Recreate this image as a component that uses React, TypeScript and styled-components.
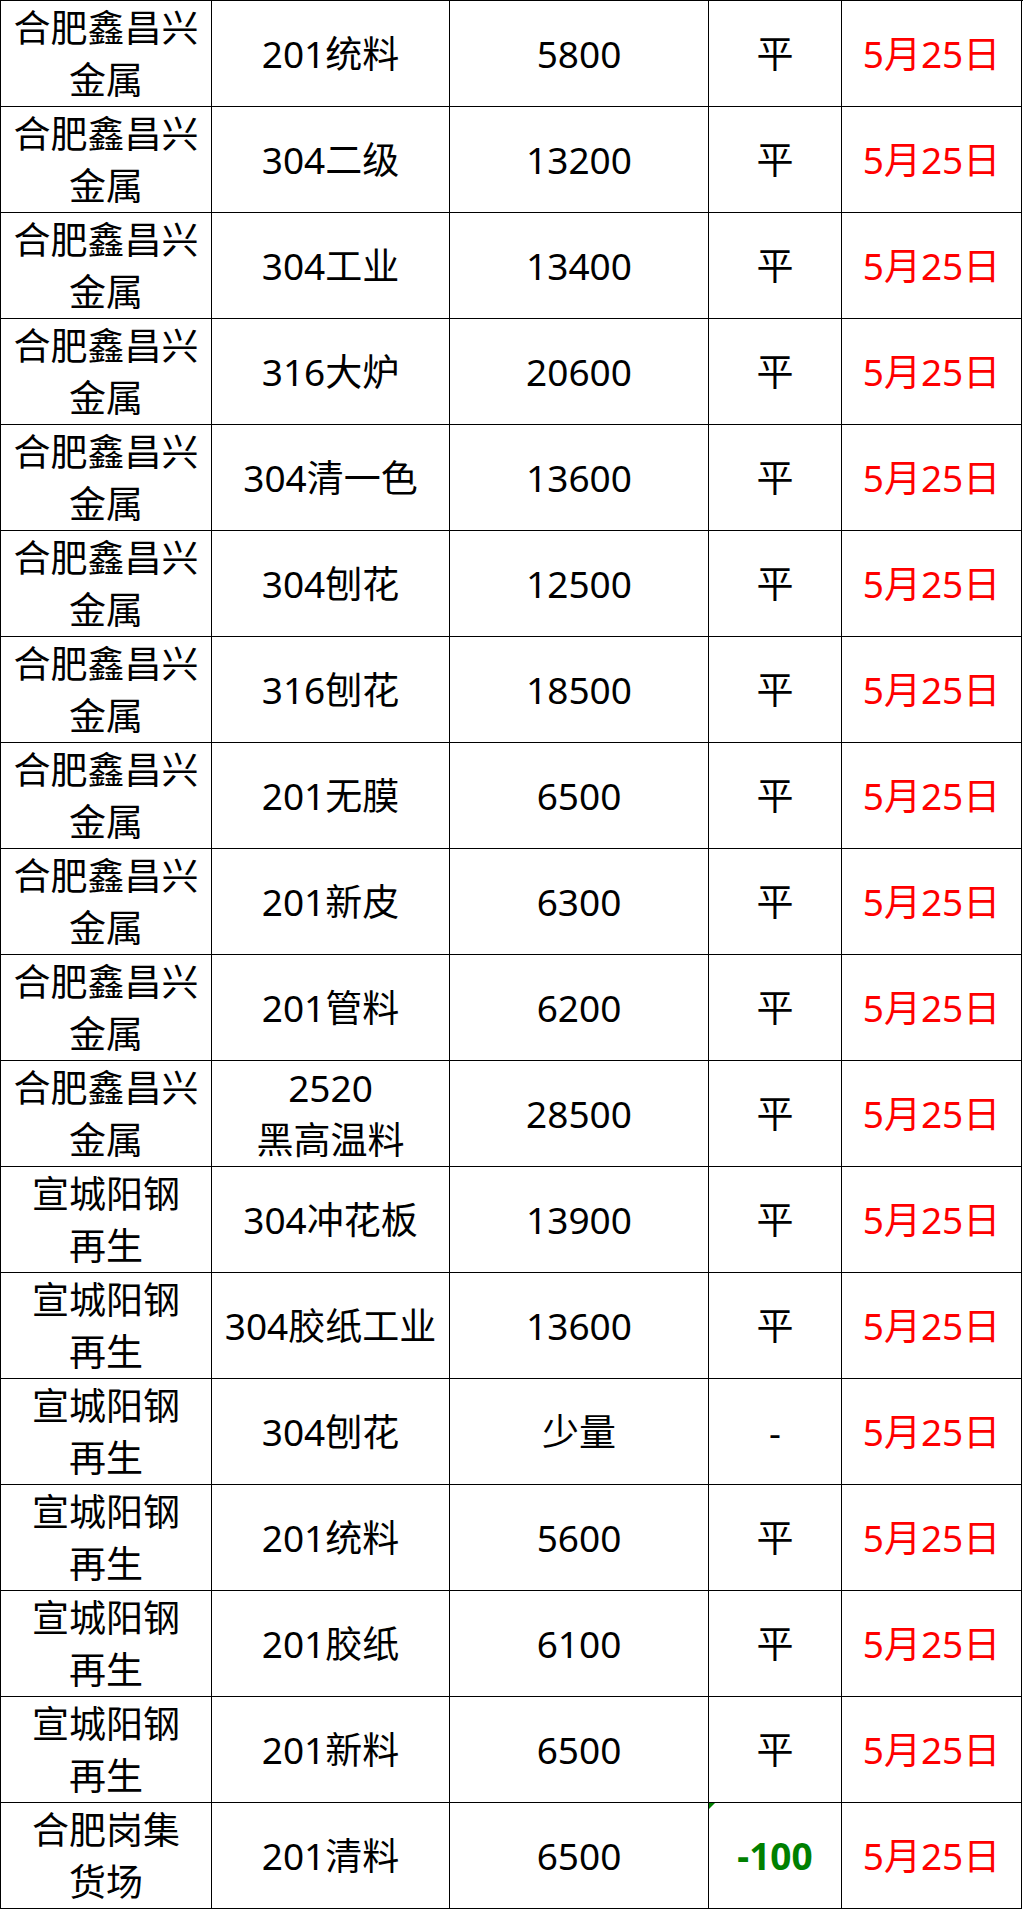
import React from 'react';
import styled, { createGlobalStyle } from 'styled-components';

type PriceRow = {
  company: [string, string];
  product: string[];
  price: string;
  change: string;
  date: string;
};

const XCX: [string, string] = ['合肥鑫昌兴', '金属'];
const XCYG: [string, string] = ['宣城阳钢', '再生'];

const rows: PriceRow[] = [
  { company: XCX, product: ['201统料'], price: '5800', change: '平', date: '5月25日' },
  { company: XCX, product: ['304二级'], price: '13200', change: '平', date: '5月25日' },
  { company: XCX, product: ['304工业'], price: '13400', change: '平', date: '5月25日' },
  { company: XCX, product: ['316大炉'], price: '20600', change: '平', date: '5月25日' },
  { company: XCX, product: ['304清一色'], price: '13600', change: '平', date: '5月25日' },
  { company: XCX, product: ['304刨花'], price: '12500', change: '平', date: '5月25日' },
  { company: XCX, product: ['316刨花'], price: '18500', change: '平', date: '5月25日' },
  { company: XCX, product: ['201无膜'], price: '6500', change: '平', date: '5月25日' },
  { company: XCX, product: ['201新皮'], price: '6300', change: '平', date: '5月25日' },
  { company: XCX, product: ['201管料'], price: '6200', change: '平', date: '5月25日' },
  { company: XCX, product: ['2520', '黑高温料'], price: '28500', change: '平', date: '5月25日' },
  { company: XCYG, product: ['304冲花板'], price: '13900', change: '平', date: '5月25日' },
  { company: XCYG, product: ['304胶纸工业'], price: '13600', change: '平', date: '5月25日' },
  { company: XCYG, product: ['304刨花'], price: '少量', change: '-', date: '5月25日' },
  { company: XCYG, product: ['201统料'], price: '5600', change: '平', date: '5月25日' },
  { company: XCYG, product: ['201胶纸'], price: '6100', change: '平', date: '5月25日' },
  { company: XCYG, product: ['201新料'], price: '6500', change: '平', date: '5月25日' },
  { company: ['合肥岗集', '货场'], product: ['201清料'], price: '6500', change: '-100', date: '5月25日' },
];

const GlobalStyle = createGlobalStyle`
  body {
    margin: 0;
    background: #ffffff;
  }
`;

const Sheet = styled.div`
  display: grid;
  grid-template-columns: 211px 238px 259px 133px 180px;
  grid-auto-rows: 106px;
  width: 1022px;
  border-left: 1px solid #000;
  border-top: 1px solid #000;
  font-family: 'Noto Sans', 'Noto Sans CJK SC', sans-serif;
  font-size: 37px;
  line-height: 52px;
  color: #000;
`;

const Cell = styled.div<{ $tone?: 'date' | 'down' }>`
  position: relative;
  box-sizing: border-box;
  border-right: 1px solid #000;
  border-bottom: 1px solid #000;
  display: flex;
  flex-direction: column;
  align-items: center;
  justify-content: center;
  text-align: center;
  white-space: nowrap;
  color: ${(p) => (p.$tone === 'date' ? '#ff0000' : p.$tone === 'down' ? '#008000' : '#000')};
  font-weight: ${(p) => (p.$tone === 'down' ? 700 : 400)};

  ${(p) =>
    p.$tone === 'down' &&
    `
    &::before {
      content: '';
      position: absolute;
      top: 0;
      left: 0;
      border-top: 6px solid #008000;
      border-right: 6px solid transparent;
    }
  `}
`;

const Line = styled.span`
  display: block;
`;

export default function App() {
  return (
    <>
      <GlobalStyle />
      <Sheet>
        {rows.map((r, i) => (
          <React.Fragment key={i}>
            <Cell>
              <Line>{r.company[0]}</Line>
              <Line>{r.company[1]}</Line>
            </Cell>
            <Cell>
              {r.product.map((p) => (
                <Line key={p}>{p}</Line>
              ))}
            </Cell>
            <Cell>{r.price}</Cell>
            <Cell $tone={r.change.startsWith('-1') ? 'down' : undefined}>{r.change}</Cell>
            <Cell $tone="date">{r.date}</Cell>
          </React.Fragment>
        ))}
      </Sheet>
    </>
  );
}
